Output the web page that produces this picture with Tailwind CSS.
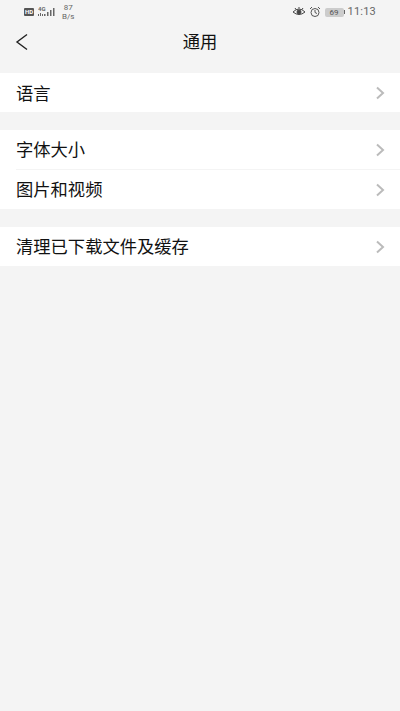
<!DOCTYPE html>
<html lang="zh">
<head>
    <meta charset="UTF-8">
    <meta name="viewport" content="width=device-width, initial-scale=1.0">
    <title>通用</title>
    <script src="https://cdn.jsdelivr.net/npm/@tailwindcss/browser@4"></script>
</head>
<body class="bg-[#f4f4f4] font-['Roboto','Noto_Sans_CJK_SC',sans-serif]">
    <div class="w-[400px] h-[711px] overflow-hidden flex flex-col">

        <!-- status bar -->
        <div class="h-[24px] flex items-center justify-between pl-[24px] pr-[24px] text-[#666666]">
            <div class="flex items-center">
                <span class="w-[10px] h-[8px] rounded-[1px] bg-[#555555] text-white text-[6px] leading-[8px] font-bold text-center">HD</span>
                <svg class="ml-[4px]" width="18" height="12" viewBox="0 0 18 12" fill="#666666">
                    <text x="0" y="5" font-size="6" font-weight="700" fill="#666666">4G</text>
                    <rect x="0" y="8" width="1" height="2"/>
                    <rect x="2" y="7" width="1" height="3"/>
                    <rect x="4" y="8" width="1" height="2"/>
                    <rect x="6" y="8" width="1.5" height="2"/>
                    <rect x="9" y="6" width="1.5" height="4"/>
                    <rect x="12" y="4" width="1.5" height="6"/>
                    <rect x="15" y="2" width="1.5" height="8"/>
                </svg>
                <span class="ml-[6px] text-[8px] leading-[9px] text-center -mt-[1px]">87<br>B/s</span>
            </div>
            <div class="flex items-center">
                <svg width="14" height="12" viewBox="0 0 14 12" fill="none" stroke="#444444" stroke-width="1">
                    <path d="M1 6 Q7 0 13 6 Q7 11 1 6Z"/>
                    <circle cx="7" cy="6" r="2" fill="#444444"/>
                    <path d="M3 2 L4 3.5 M7 1 V2.5 M11 2 L10 3.5"/>
                </svg>
                <svg class="ml-[3px]" width="12" height="12" viewBox="0 0 12 12" fill="none" stroke="#555555" stroke-width="1">
                    <circle cx="6" cy="6.5" r="4"/>
                    <path d="M6 4 V6.5 L8 7.5 M1 3 L3 1 M11 3 L9 1"/>
                </svg>
                <div class="ml-[4px] w-[19px] h-[9px] rounded-[2px] bg-[#cccccc] text-[#555555] text-[8px] leading-[9px] text-center">69</div>
                <div class="w-[1px] h-[4px] bg-[#666666]"></div>
                <span class="ml-[3px] text-[11px] leading-[12px] tracking-[0.2px]">11:13</span>
            </div>
        </div>

        <!-- title bar -->
        <div class="relative h-[36px] flex items-center justify-center">
            <svg class="absolute left-[15px] top-[9px]" width="14" height="18" viewBox="0 0 14 18" fill="none" stroke="#222222" stroke-width="1.4">
                <path d="M12 1.5 L2 9 L12 16.5"/>
            </svg>
            <h1 class="text-[17.3px] text-[#111111] leading-[24px]">通用</h1>
        </div>

        <!-- groups -->
        <div class="mt-[13px] bg-white">
            <div class="h-[39px] pl-[16px] pr-[15px] flex items-center justify-between text-[17.3px] text-[#111111]">
                <span class="pt-[4px]">语言</span>
                <svg width="10" height="14" viewBox="0 0 10 14" fill="none" stroke="#bbbbbb" stroke-width="2"><path d="M2 1.5 L8 7 L2 12.5"/></svg>
            </div>
        </div>

        <div class="mt-[18px] bg-white">
            <div class="h-[39px] pl-[16px] pr-[15px] flex items-center justify-between text-[17.3px] text-[#111111]">
                <span class="pt-[3px]">字体大小</span>
                <svg width="10" height="14" viewBox="0 0 10 14" fill="none" stroke="#bbbbbb" stroke-width="2"><path d="M2 1.5 L8 7 L2 12.5"/></svg>
            </div>
            <div class="ml-[16px] h-[1px] bg-[#f4f4f4]"></div>
            <div class="h-[39px] pl-[16px] pr-[15px] flex items-center justify-between text-[17.3px] text-[#111111]">
                <span class="pt-[2px]">图片和视频</span>
                <svg width="10" height="14" viewBox="0 0 10 14" fill="none" stroke="#bbbbbb" stroke-width="2"><path d="M2 1.5 L8 7 L2 12.5"/></svg>
            </div>
        </div>

        <div class="mt-[18px] bg-white">
            <div class="h-[39px] pl-[16px] pr-[15px] flex items-center justify-between text-[17.3px] text-[#111111]">
                <span class="pt-[2px]">清理已下载文件及缓存</span>
                <svg width="10" height="14" viewBox="0 0 10 14" fill="none" stroke="#bbbbbb" stroke-width="2"><path d="M2 1.5 L8 7 L2 12.5"/></svg>
            </div>
        </div>
    </div>
</body>
</html>
